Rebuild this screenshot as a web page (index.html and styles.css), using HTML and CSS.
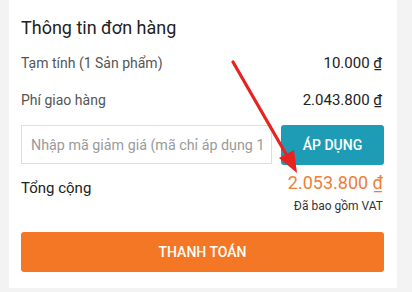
FILE: index.html
```html
<!DOCTYPE html>
<html lang="vi">
<head>
<meta charset="utf-8">
<link rel="stylesheet" href="styles.css">
</head>
<body>
<div class="card">
  <h2 class="title">Thông tin đơn hàng</h2>
  <div class="row">
    <span class="label">Tạm tính (1 Sản phẩm)</span>
    <span class="value">10.000 ₫</span>
  </div>
  <div class="row">
    <span class="label">Phí giao hàng</span>
    <span class="value">2.043.800 ₫</span>
  </div>
  <div class="coupon">
    <input class="coupon-input" type="text" placeholder="Nhập mã giảm giá (mã chỉ áp dụng 1 lần)">
    <button class="apply">ÁP DỤNG</button>
  </div>
  <div class="total">
    <span class="total-label">Tổng cộng</span>
    <div class="total-right">
      <span class="total-value">2.053.800 ₫</span>
      <span class="vat">Đã bao gồm VAT</span>
    </div>
  </div>
  <button class="pay">THANH TOÁN</button>
  <svg class="arrow" width="412" height="292" viewBox="0 0 412 292">
    <line x1="233" y1="62" x2="290" y2="161" stroke="#e8231f" stroke-width="3.2" stroke-linecap="round"/>
    <polygon points="297,173 279,158 294,150" fill="#e8231f"/>
  </svg>
</div>
</body>
</html>
```
FILE: styles.css
```css
* { box-sizing: border-box; }
html, body { margin: 0; padding: 0; }
body {
  background: #f3f3f3;
  font-family: Roboto, "Noto Sans", sans-serif;
  width: 412px;
  height: 292px;
  overflow: hidden;
}
.card {
  margin-left: 9px;
  width: 388px;
  height: 288px;
  background: #fff;
  padding: 16px 12px 0 12px;
  display: flex;
  flex-direction: column;
}
.title {
  margin: 0;
  font-size: 18px;
  font-weight: 400;
  color: #222;
  line-height: 24px;
}
.row {
  display: flex;
  justify-content: space-between;
  align-items: center;
  height: 20px;
  margin-top: 13px;
}
.row + .row { margin-top: 17px; }
.label { font-size: 14px; color: #555; }
.value { font-size: 15px; color: #222; padding-right: 3px; }
.coupon {
  display: flex;
  margin-top: 15px;
  gap: 9px;
}
.coupon-input {
  width: 251px;
  height: 39px;
  border: 1px solid #ddd;
  border-radius: 0;
  padding: 0 3px 0 9px;
  font-family: Roboto, sans-serif;
  font-size: 14.3px;
  color: #333;
  outline: none;
}
.coupon-input::placeholder { color: #9a9a9a; }
.apply {
  width: 103px;
  height: 40px;
  border: 0;
  border-radius: 3px;
  background: #1e9bb5;
  color: #fff;
  font-family: Roboto, sans-serif;
  font-size: 14px;
  font-weight: 500;
}
.total {
  display: flex;
  justify-content: space-between;
  margin-top: 6px;
}
.total-label { font-size: 15px; color: #222; margin-top: 8px; }
.total-right {
  display: flex;
  flex-direction: column;
  align-items: flex-end;
  padding-right: 2px;
}
.total-value { font-size: 18px; color: #ef7e38; line-height: 24px; }
.vat { font-size: 12px; color: #333; margin-top: 4px; }
.pay {
  margin-top: 19px;
  width: 363px;
  height: 40px;
  border: 0;
  border-radius: 3px;
  background: #f47726;
  color: #fff;
  font-family: Roboto, sans-serif;
  font-size: 14px;
  font-weight: 500;
}
.arrow {
  position: absolute;
  left: 0;
  top: 0;
  pointer-events: none;
}
```
